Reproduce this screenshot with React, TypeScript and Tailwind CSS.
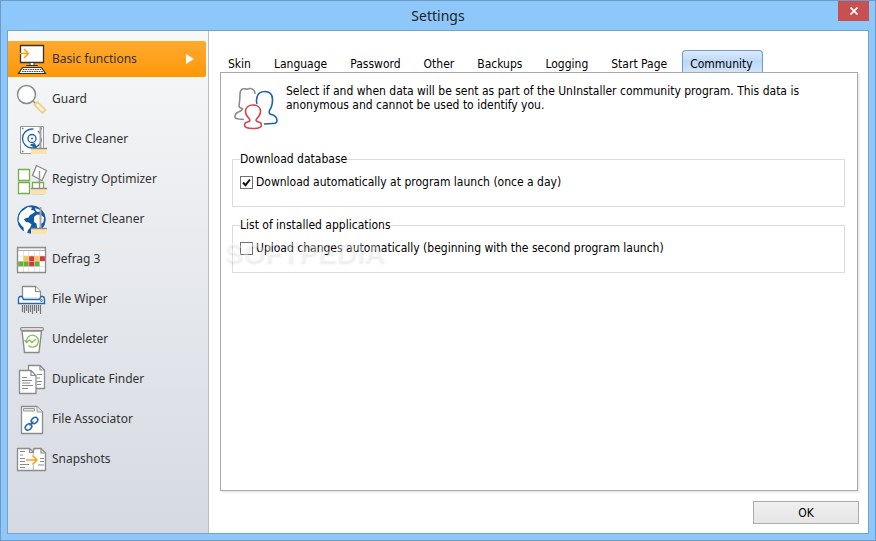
import { useState } from "react";
import type { ReactNode } from "react";

function Icon({ children }: { children: ReactNode }) {
  return (
    <svg
      viewBox="0 0 32 32"
      className="size-8 shrink-0"
      fill="none"
      stroke="#8b8b8b"
      aria-hidden="true"
    >
      {children}
    </svg>
  );
}

/** Small broom shared by the cleaner icons */
function Broom() {
  return (
    <>
      <path d="M24.5 4V25" stroke="#a4a4a4" strokeWidth="2" />
      <path d="M15 26h16v5H15z" fill="#fbe3b0" stroke="none" />
      <path d="M15 25.5h16" stroke="#8b8b8b" strokeWidth="1.5" />
    </>
  );
}

function BasicIcon() {
  return (
    <Icon>
      <path d="M4.5 2.5h23v17h-23z" fill="#fff" stroke="#333" strokeWidth="1.3" />
      <path d="M14 19.5h4v3h-4z" fill="#fff" stroke="#333" />
      <path d="M10 22.5h12" stroke="#333" />
      <path d="M6.5 24.5h19l4 6h-27z" fill="#fff" stroke="#333" strokeWidth="1.2" />
      <path d="M7 26.5h19M6 28.5h21" stroke="#444" strokeDasharray="1.6 .8" />
      <path d="M2.5 10.5h10M8 6l4.5 4.5L8 15" stroke="#f7a11a" strokeWidth="1.5" />
    </Icon>
  );
}

function GuardIcon() {
  return (
    <Icon>
      <circle cx="10.5" cy="11.5" r="9" fill="#fff" strokeWidth="1.5" />
      <path d="M17 18l3 3" strokeWidth="1.5" />
      <path d="M18.5 22l3-3 8 8-3 3z" fill="#fff8e6" stroke="#efcf8b" strokeWidth="1.8" />
    </Icon>
  );
}

function DriveIcon() {
  return (
    <Icon>
      <path d="M4.5 3.5h23v27h-23z" fill="#fff" stroke="#999" />
      <path d="M6 5.5h1.5M24.5 5.5H26M6 28.5h1.5" stroke="#777" strokeWidth="1.5" />
      <circle cx="16" cy="15.5" r="9.5" stroke="#1c61a6" strokeWidth="1.3" strokeDasharray="46 5 3 6" />
      <circle cx="16" cy="15.5" r="4" stroke="#1c61a6" strokeWidth="1.3" />
      <circle cx="16" cy="15.5" r="1" fill="#1c61a6" stroke="none" />
      <path d="M14.5 22l4-1.5 2 4.5z" fill="#1c61a6" stroke="#1c61a6" />
      <Broom />
    </Icon>
  );
}

function RegistryIcon() {
  return (
    <Icon>
      <path d="M2.5 6.5h11v11h-11zM2.5 19.5h11v11h-11zM16.5 19.5h11v11h-11z" fill="#fff" stroke="#79ad4b" strokeWidth="1.3" />
      <path d="M20.5 2.5l10 5-4.5 10-9.5-5z" fill="#fff" strokeWidth="1.3" />
      <path d="M23.5 8v18" stroke="#999" strokeWidth="1.5" />
      <path d="M15 26h16v5H15z" fill="#fbe3b0" stroke="none" />
      <path d="M15 25.5h16" strokeWidth="1.5" />
    </Icon>
  );
}

function InternetIcon() {
  return (
    <Icon>
      <circle cx="15.5" cy="16.5" r="13.8" fill="#125ba3" stroke="#125ba3" strokeWidth=".8" />
      <g fill="#fff" stroke="none">
        <path d="M12 4l4 .5-1 2.500 3 .5 1 1.500-3 2-2 1-1.500 2.500-2.500.5-2 1.500 2 2.500 3 .5 2.500 2-1.500 3.500-2 2-1 3.500-3-2-.5-4-2.500-2.500-2.500-4 .5-5 2-4z" />
        <path d="M19 5l4 1.500 2 2-3 .5-2-1zM18 14l3-2.500 4 .5 3 2.500-.5 4.500-2.500 2-2 4.500-2-1-.5-4-2.500-1.500z" />
      </g>
      <Broom />
    </Icon>
  );
}

function DefragIcon() {
  const cells = [
    "#fff", "#fff", "#fff", "#fff", "#fff",
    "#fff", "#f8c456", "#d53737", "#f8c456", "#d53737",
    "#6bad35", "#6bad35", "#d53737", "#6bad35", "#fff",
    "#fff", "#fff", "#fff", "#fff", "#fff",
  ];
  return (
    <Icon>
      <path d="M1.5 4.5h28v25h-28z" fill="#d5d5d5" strokeWidth="1.3" />
      <path d="M2 5h27v2.5H2z" fill="#f4f4f4" stroke="#999" strokeWidth=".7" />
      {cells.map((color, i) => (
        <rect
          key={i}
          x={2.4 + (i % 5) * 5.4}
          y={8 + Math.floor(i / 5) * 5.3}
          width="4.8"
          height="4.7"
          fill={color}
          stroke="none"
        />
      ))}
    </Icon>
  );
}

function WiperIcon() {
  return (
    <Icon>
      <path d="M6.5 14V3.5h13l5 5V14" fill="#fff" strokeWidth="1.3" />
      <path d="M19.5 3.5v5h5" fill="#fff" strokeWidth="1.2" />
      <path d="M6 13.5H4.5c-2 0-2 2-2 3.5v3.5h26V17c0-1.500 0-3.500-2-3.500H25l-1.500 3h-16z" fill="#fff" stroke="#2868aa" strokeWidth="1.4" />
      <circle cx="25.5" cy="17.5" r="1" stroke="#2868aa" />
      <path d="M6.5 22v7M8.5 22v8M10.5 22v6M12.5 22v8M14.5 22v7M16.5 22v9M18.5 22v6M20.5 22v8M22.5 22v6M24.5 22v9" stroke="#777" strokeWidth="1.2" />
    </Icon>
  );
}

function UndeleteIcon() {
  return (
    <Icon>
      <path d="M6 8l2.5 21.5H23L25.5 8z" fill="#fff" strokeWidth="1.4" />
      <rect x="4.5" y="4.5" width="23" height="3" rx="1.5" fill="#ddd" strokeWidth="1.2" />
      <path d="M10.5 18.5a6 6 0 1 1 1.8 4M8.5 17l2 2.5 2.5-2M13 16.5l3 3 4-3.5" stroke="#86be5b" strokeWidth="1.3" />
    </Icon>
  );
}

function DuplicateIcon() {
  return (
    <Icon>
      <path d="M12.5 2.5H24l4.5 4.5v18.5h-16z" fill="#fff" strokeWidth="1.3" />
      <path d="M24 2.5V7h4.5M21 11.5h5M21 15h3M21 18.5h5M21 21.5h4" strokeWidth="1.2" />
      <path d="M3.5 7.5H15l5 5v18H3.5z" fill="#fff" strokeWidth="1.3" />
      <path d="M15 7.5v5h5M6 14.5h5M6 17.5h10M6 20h8M6 22.5h11M6 25.5h6" strokeWidth="1.2" />
    </Icon>
  );
}

function AssociatorIcon() {
  return (
    <Icon>
      <path d="M5.5 3.5H21l5.5 5.5v21.5h-21z" fill="#fff" strokeWidth="1.3" />
      <path d="M21 3.5V9h5.5M7.5 5.5h11V8h-11z" fill="#e4e4e4" stroke="#999" />
      <g stroke="#2868aa" strokeWidth="1.5">
        <ellipse cx="18.5" cy="17.5" rx="3.6" ry="2.7" transform="rotate(-40 18.5 17.5)" />
        <ellipse cx="12.5" cy="24" rx="3.6" ry="2.7" transform="rotate(-40 12.5 24)" />
        <path d="M13.5 22.5l4-4" />
      </g>
    </Icon>
  );
}

function SnapshotsIcon() {
  return (
    <Icon>
      <path d="M1.5 5.5h12l4 4v18h-16z" fill="#fff" strokeWidth="1.3" />
      <path d="M17.5 5.5H25l4.5 4.5v17.5h-12" fill="#fff" strokeWidth="1.3" />
      <path d="M13.5 5.5v4h4V6h2M25 5.5V10h4.5M4 8.5h5M4 12h3M4 15.5h5M4 18.5h5M4 21.5h9M4 24.5h5M24 15.5h4M24 18.5h4M22 22h6" strokeWidth="1.2" />
      <path d="M17.5 12v10" stroke="#fff" strokeWidth="2" />
      <path d="M10 17h11M16.5 12.5L21 17l-4.5 4.5" stroke="#f7a11a" strokeWidth="1.5" />
    </Icon>
  );
}

function CommunityIcon() {
  return (
    <svg
      viewBox="0 0 44 43"
      className="h-[43px] w-11 shrink-0"
      fill="none"
      strokeWidth="1.6"
      aria-hidden="true"
    >
      <path
        d="M21 7c0-3-2-5.500-5-5.500-2 0-2 1-4 .5-4-1-6 1-6 5 0 5-.5 8-1 12 0 2 2 2 3.500 2.500 0 2-1.500 2.500-4 3.500-3 1-3.500 3-3.500 5s2 1.500 4 2l5 .5"
        stroke="#8c8c8c"
      />
      <path
        d="M23 17c-1-2-.5-5 0-7 1-3.500 4-5.500 7.500-5.500 5 0 8 3 8 8 0 5-1 8-3 11-1 2 0 3.500 2 4 4 1 5.500 3 5.500 6 0 2.500-1.500 3-4 3l-9 .5"
        stroke="#1f62a5"
      />
      <path
        d="M15.500 32c-3-3-4-5-4-7.500 0-4 3-6.500 7.500-6.500s7.500 2.500 7.500 6.500c0 2.500-1 4.500-4 7.500-1 2 0 2.500 2 3 2.500.5 3 1.500 3 3 0 2.500-4 3.500-8.500 3.500s-8.500-1-8.500-3.500c0-1.500.5-2.500 3-3 2-.5 3-1 2-3z"
        stroke="#d84146"
      />
    </svg>
  );
}

const modules = [
  { name: "Basic functions", icon: <BasicIcon /> },
  { name: "Guard", icon: <GuardIcon /> },
  { name: "Drive Cleaner", icon: <DriveIcon /> },
  { name: "Registry Optimizer", icon: <RegistryIcon /> },
  { name: "Internet Cleaner", icon: <InternetIcon /> },
  { name: "Defrag 3", icon: <DefragIcon /> },
  { name: "File Wiper", icon: <WiperIcon /> },
  { name: "Undeleter", icon: <UndeleteIcon /> },
  { name: "Duplicate Finder", icon: <DuplicateIcon /> },
  { name: "File Associator", icon: <AssociatorIcon /> },
  { name: "Snapshots", icon: <SnapshotsIcon /> },
];

const tabs = [
  "Skin",
  "Language",
  "Password",
  "Other",
  "Backups",
  "Logging",
  "Start Page",
  "Community",
];

function Option({
  title,
  label,
  initial,
}: {
  title: string;
  label: string;
  initial: boolean;
}) {
  const [checked, setChecked] = useState(initial);
  return (
    <fieldset className="border border-[#dcdcdc] px-[7px] pt-[7px] pb-4">
      <legend className="leading-4">{title}</legend>
      <label className="flex items-center gap-[3px] leading-4">
        <span className="relative flex size-[13px]">
          <input
            type="checkbox"
            checked={checked}
            onChange={(e) => setChecked(e.target.checked)}
            className="size-[13px] appearance-none border border-[#707070] bg-white"
          />
          {checked && (
            <svg
              viewBox="0 0 13 13"
              className="pointer-events-none absolute inset-0"
              fill="none"
              stroke="#111"
              strokeWidth="2"
            >
              <path d="M3 6.5l2.5 2.7L10 3.5" />
            </svg>
          )}
        </span>
        {label}
      </label>
    </fieldset>
  );
}

export default function App() {
  const [module, setModule] = useState("Basic functions");
  const [tab, setTab] = useState("Community");

  return (
    <div className="flex min-h-screen flex-col border border-[#6c9bc6] bg-[#8ec8fa] px-1.5 pb-1.5 font-['DejaVu_Sans_Condensed','DejaVu_Sans',sans-serif] text-[12px] text-black">
      {/* Title bar */}
      <header className="relative flex h-[29px] items-center justify-center">
        <h1 className="font-['Noto_Sans',sans-serif] text-[14px] leading-5 text-[#222]">Settings</h1>
        <button
          type="button"
          aria-label="Close"
          className="absolute top-0 right-0 flex h-5 w-[31px] items-center justify-center bg-[#c75050]"
        >
          <svg viewBox="0 0 8 8" className="size-2" stroke="#fff" strokeWidth="1.7">
            <path d="M.5.5l7 7M7.5.5l-7 7" />
          </svg>
        </button>
      </header>

      <div className="flex grow border border-[#73a3d1] bg-white">
        {/* Modules */}
        <nav className="flex w-[201px] shrink-0 flex-col gap-1 border-r border-[#bcbcbc] bg-linear-to-b from-[#f7f8f8] to-[#d5d9e2] pt-2.5 pr-0.5 font-['Noto_Sans',sans-serif]">
          {modules.map((m) => (
            <button
              key={m.name}
              type="button"
              onClick={() => setModule(m.name)}
              className={`flex h-9 items-center gap-1 rounded-r-xs pl-2 text-left text-[#333] ${
                m.name === module ? "bg-linear-to-b from-[#ffa92d] to-[#ff9800]" : ""
              }`}
            >
              {m.icon}
              <span className="grow">{m.name}</span>
              {m.name === module && (
                <svg viewBox="0 0 8 10" className="mr-3 h-2.5 w-2" fill="#fff">
                  <path d="M0 0l8 5-8 5z" />
                </svg>
              )}
            </button>
          ))}
        </nav>

        <main className="flex min-w-0 grow flex-col pt-[19px] pr-[9px] pb-[9px] pl-[11px]">
          <div role="tablist" className="flex gap-[5px]">
            {tabs.map((t) => (
              <button
                key={t}
                type="button"
                role="tab"
                aria-selected={t === tab}
                onClick={() => setTab(t)}
                className={`h-[22px] rounded-t border border-b-0 pt-1 pr-[9px] pl-[7px] leading-4 ${
                  t === tab
                    ? "border-[#6c9bd2] bg-linear-to-b from-[#dceafb] via-[#bfd8f8] to-[#d2e4fb]"
                    : "border-transparent"
                }`}
              >
                {t}
              </button>
            ))}
          </div>

          <section className="mr-px flex grow flex-col gap-2.5 border border-[#a8a8a8] pt-[11px] pr-3 pl-[11px] shadow-[2px_2px_0_#eeeeee]">
            <div className="flex gap-2 pb-[11px]">
              <div className="pt-[3px] pl-0.5">
                <CommunityIcon />
              </div>
              <p className="max-w-[540px] leading-[14px]">
                Select if and when data will be sent as part of the UnInstaller community
                program. This data is anonymous and cannot be used to identify you.
              </p>
            </div>
            <Option
              title="Download database"
              label="Download automatically at program launch (once a day)"
              initial={true}
            />
            <div className="relative">
              <Option
                title="List of installed applications"
                label="Upload changes automatically (beginning with the second program launch)"
                initial={false}
              />
              <span className="pointer-events-none absolute top-5 -left-2 font-['Liberation_Sans',sans-serif] text-[28px] leading-8 font-bold text-white/40 [text-shadow:1px_2px_2px_rgb(0_0_0/0.08)]">
                SOFTPEDIA
              </span>
            </div>
          </section>

          <div className="flex justify-end pt-2.5">
            <button
              type="button"
              className="h-[23px] w-[106px] border border-[#acacac] bg-linear-to-b from-[#f0f0f0] to-[#e5e5e5]"
            >
              OK
            </button>
          </div>
        </main>
      </div>
    </div>
  );
}
